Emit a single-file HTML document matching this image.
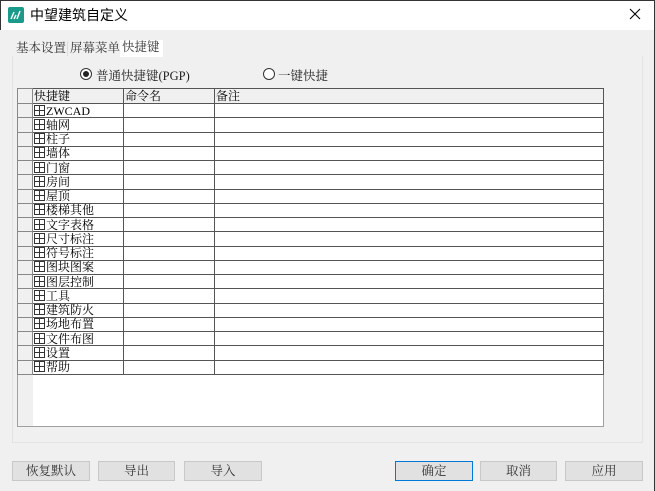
<!DOCTYPE html>
<html><head><meta charset="utf-8"><style>
*{margin:0;padding:0;box-sizing:border-box}
body{width:655px;height:491px;overflow:hidden;background:#f0f0f0;position:relative;font-family:"Liberation Sans","Noto Sans CJK SC",sans-serif;font-size:12px;color:#000}
.abs{position:absolute}
.title{left:0;top:0;width:655px;height:30px;background:#fff;border:1px solid #333;border-bottom:none}
.serif{font-family:"Liberation Serif","Noto Serif CJK SC",serif}
.tab{top:41px;height:15px;line-height:15px;font-size:12.5px;color:#333;padding-left:2px}
.panel{left:12px;top:56px;width:631px;height:387px;background:#f0f0f0;border:1px solid #e3e3e3;border-top:none}
.grid{left:17px;top:88px;width:587px;height:339px;background:#fff;border:1px solid #a0a0a0}
table{border-collapse:collapse;position:absolute;left:17px;top:88px;width:587px;font-family:"Liberation Serif","Noto Serif CJK SC",serif;font-size:12px}
td{border:1px solid #555;height:14.26px;padding:0 0 0 1px;line-height:12px;white-space:nowrap;overflow:hidden}
td.rh{width:15px;background:#f0f0f0;border-color:#888}
tr.h td{background:#f0f0f0;height:15px}
.plus{display:inline-block;width:11px;height:11px;border:1px solid #333;position:relative;vertical-align:-1px;margin-right:1px}
.plus:before{content:"";position:absolute;left:4px;top:0;width:1px;height:9px;background:#333}
.plus:after{content:"";position:absolute;left:0;top:4px;width:9px;height:1px;background:#333}
.btn{top:461px;height:20px;background:#e1e1e1;border:1px solid #c8c8c8;text-align:center;line-height:18px;font-size:12.5px;color:#333;font-family:"Liberation Serif","Noto Serif CJK SC",serif}
.radio{width:12px;height:12px;border:1px solid #333;border-radius:50%;background:#fff}
</style></head><body>
<div class="abs title"></div>
<svg class="abs" style="left:8px;top:7px" width="16" height="16"><rect width="16" height="16" rx="2" fill="#1a9a8a"/><path d="M3 12 L6 5 M6 12 L8 8 M9 12 L12 4" stroke="#fff" stroke-width="1.4" fill="none"/></svg>
<div class="abs" style="left:30px;top:6px;font-size:14px;line-height:18px">中望建筑自定义</div>
<svg class="abs" style="left:629px;top:8px" width="12" height="12"><path d="M1 1L11 11M11 1L1 11" stroke="#000" stroke-width="1.1"/></svg>
<div class="abs panel"></div>
<div class="abs tab serif" style="left:14px;width:53px">基本设置</div>
<div class="abs tab serif" style="left:67px;width:53px;border-left:1px solid #ddd">屏幕菜单</div>
<div class="abs tab serif" style="left:120px;width:43px;background:#fff;top:40px;height:17px">快捷键</div>
<div class="abs radio" style="left:80px;top:68px"></div><div class="abs" style="left:83px;top:71px;width:6px;height:6px;border-radius:50%;background:#222"></div>
<div class="abs serif" style="left:96px;top:66px;font-size:12.5px;color:#222">普通快捷键(PGP)</div>
<div class="abs radio" style="left:263px;top:68px"></div>
<div class="abs serif" style="left:278px;top:66px;font-size:12.5px;color:#222">一键快捷</div>
<div class="abs grid"></div>
<div class="abs" style="left:18px;top:103px;width:15px;height:323px;background:#f0f0f0"></div>
<table>
<tr class="h"><td class="rh"></td><td style="width:91px">快捷键</td><td style="width:91px">命令名</td><td>备注</td></tr>
<tr><td class="rh"></td><td><span class="plus"></span>ZWCAD</td><td></td><td></td></tr>
<tr><td class="rh"></td><td><span class="plus"></span>轴网</td><td></td><td></td></tr>
<tr><td class="rh"></td><td><span class="plus"></span>柱子</td><td></td><td></td></tr>
<tr><td class="rh"></td><td><span class="plus"></span>墙体</td><td></td><td></td></tr>
<tr><td class="rh"></td><td><span class="plus"></span>门窗</td><td></td><td></td></tr>
<tr><td class="rh"></td><td><span class="plus"></span>房间</td><td></td><td></td></tr>
<tr><td class="rh"></td><td><span class="plus"></span>屋顶</td><td></td><td></td></tr>
<tr><td class="rh"></td><td><span class="plus"></span>楼梯其他</td><td></td><td></td></tr>
<tr><td class="rh"></td><td><span class="plus"></span>文字表格</td><td></td><td></td></tr>
<tr><td class="rh"></td><td><span class="plus"></span>尺寸标注</td><td></td><td></td></tr>
<tr><td class="rh"></td><td><span class="plus"></span>符号标注</td><td></td><td></td></tr>
<tr><td class="rh"></td><td><span class="plus"></span>图块图案</td><td></td><td></td></tr>
<tr><td class="rh"></td><td><span class="plus"></span>图层控制</td><td></td><td></td></tr>
<tr><td class="rh"></td><td><span class="plus"></span>工具</td><td></td><td></td></tr>
<tr><td class="rh"></td><td><span class="plus"></span>建筑防火</td><td></td><td></td></tr>
<tr><td class="rh"></td><td><span class="plus"></span>场地布置</td><td></td><td></td></tr>
<tr><td class="rh"></td><td><span class="plus"></span>文件布图</td><td></td><td></td></tr>
<tr><td class="rh"></td><td><span class="plus"></span>设置</td><td></td><td></td></tr>
<tr><td class="rh"></td><td><span class="plus"></span>帮助</td><td></td><td></td></tr>
</table>
<div class="abs btn" style="left:12px;width:78px">恢复默认</div>
<div class="abs btn" style="left:98px;width:77px">导出</div>
<div class="abs btn" style="left:184px;width:78px">导入</div>
<div class="abs btn" style="left:395px;width:78px;border:1px solid #0078d7">确定</div>
<div class="abs btn" style="left:480px;width:77px">取消</div>
<div class="abs btn" style="left:565px;width:78px">应用</div>
<div class="abs" style="left:654px;top:0;width:1px;height:491px;background:#333"></div>
</body></html>
